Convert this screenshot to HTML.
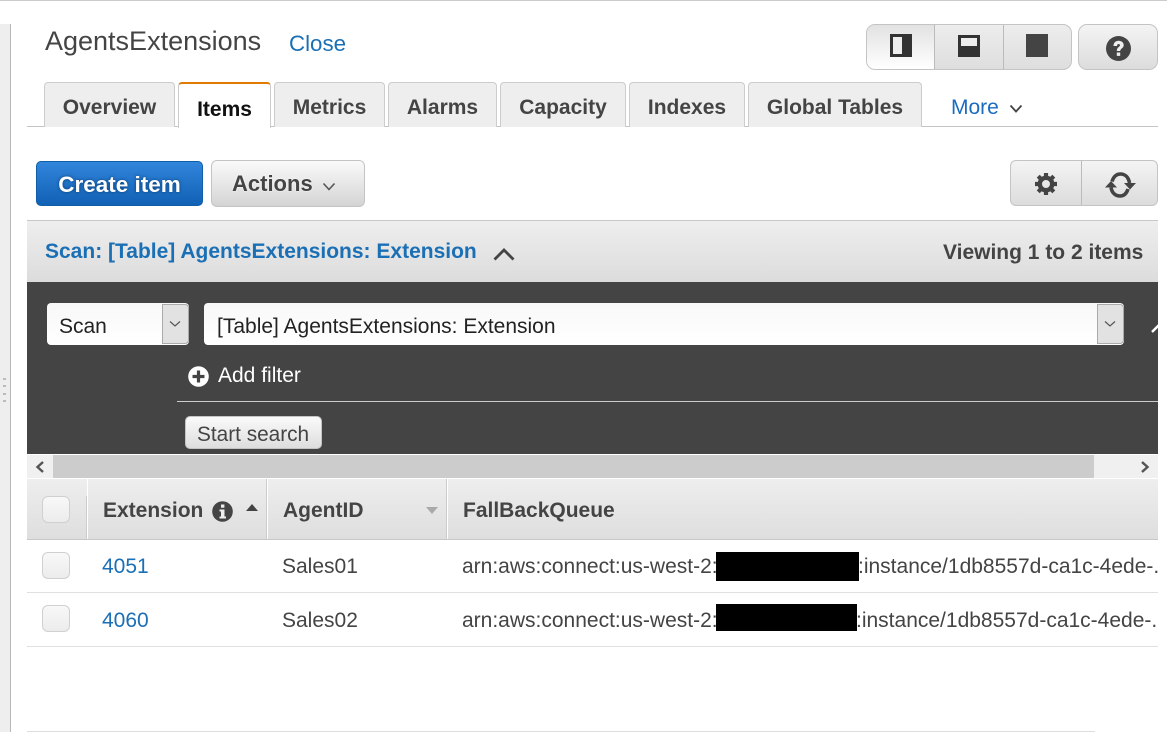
<!DOCTYPE html>
<html lang="en">
<head>
<meta charset="utf-8">
<title>AgentsExtensions</title>
<style>
html,body{margin:0;padding:0;background:#fff}
body{position:relative;width:1167px;height:732px;overflow:hidden;font-family:"Liberation Sans",Arial,sans-serif;color:#444}
.a,.t{position:absolute;box-sizing:border-box}
.t{white-space:nowrap;line-height:30px;height:30px}
.b{font-weight:bold}
.link{color:#1a6fb5}
.tab{position:absolute;box-sizing:border-box;top:82px;height:45px;background:#eee;border:1px solid #ccc;border-bottom:0;border-radius:4px 4px 0 0;font-weight:bold;font-size:21px;color:#444;text-align:center;line-height:49px}
.btn{position:absolute;box-sizing:border-box;border:1px solid #c4c4c4;border-radius:6px;background:linear-gradient(#f6f6f6,#dcdcdc)}
.cb{position:absolute;box-sizing:border-box;left:42px;width:28px;height:27px;border:1px solid #d0d0d0;border-radius:6px;background:linear-gradient(#f8f8f8,#ececec)}
svg{position:absolute;overflow:visible}
</style>
</head>
<body>
<!-- chrome -->
<div class="a" style="left:0;top:0;width:1167px;height:1px;background:#ccc"></div>
<div class="a" style="left:0;top:24px;width:11px;height:708px;background:#eee;border-right:1px solid #b8b8b8"></div>
<svg style="left:3px;top:376px" width="5" height="30"><g fill="#bbb"><rect x="0" y="2" width="3" height="2"/><rect x="0" y="9" width="3" height="2"/><rect x="0" y="17" width="3" height="2"/><rect x="0" y="24" width="3" height="2"/></g></svg>

<!-- title -->
<div class="t" style="left:45px;top:26px;font-size:27px;color:#444">AgentsExtensions</div>
<div class="t link" style="left:289px;top:28.500px;font-size:22.3px">Close</div>

<!-- layout buttons -->
<div class="btn" style="left:866px;top:24px;width:206px;height:46px;border-radius:9px;overflow:hidden;background:linear-gradient(#ededed,#dedede)">
  <div class="a" style="left:0;top:0;width:68px;height:44px;background:linear-gradient(#e2e2e2,#fff);border-right:1px solid #bbb"></div>
  <div class="a" style="left:136px;top:0;width:1px;height:44px;background:#bbb"></div>
</div>
<div class="a" style="left:890px;top:34px;width:22px;height:23px;background:#333"></div>
<div class="a" style="left:893px;top:37px;width:9px;height:17px;background:#eee"></div>
<div class="a" style="left:958px;top:35px;width:22px;height:22px;background:#333"></div>
<div class="a" style="left:961px;top:38px;width:16px;height:8px;background:#eee"></div>
<div class="a" style="left:1026px;top:34px;width:22px;height:23px;background:#444"></div>
<div class="btn" style="left:1078px;top:24px;width:80px;height:46px;border-radius:9px;background:linear-gradient(#f4f4f4,#dcdcdc)"></div>
<svg style="left:1106px;top:36px" width="25" height="25" viewBox="0 0 25 25"><circle cx="12.500" cy="12.500" r="12.500" fill="#444"/><path d="M7.500 10c0-3.400 2.300-5.200 5.100-5.200 3 0 5.100 1.800 5.100 4.400 0 2.900-3.500 3.300-3.500 5.800h-3.400c0-3.800 3.200-4 3.200-5.700 0-.8-.6-1.300-1.400-1.300-1 0-1.500.7-1.600 2z" fill="#eee"/><rect x="10.800" y="16.500" width="3.400" height="3.400" fill="#eee"/></svg>

<!-- tabs -->
<div class="a" style="left:27px;top:126px;width:1131px;height:1px;background:#c4c4c4"></div>
<div class="tab" style="left:44px;width:131px">Overview</div>
<div class="tab" style="left:178px;width:93px;height:46px;background:#fff;color:#111;border-top:2px solid #e07b00;line-height:51px;z-index:2">Items</div>
<div class="tab" style="left:274px;width:111px">Metrics</div>
<div class="tab" style="left:388px;width:109px">Alarms</div>
<div class="tab" style="left:500px;width:126px">Capacity</div>
<div class="tab" style="left:629px;width:116px">Indexes</div>
<div class="tab" style="left:748px;width:174px">Global Tables</div>
<div class="t link" style="left:951px;top:92.500px;font-size:21px;color:#1a6cc0">More</div>
<svg style="left:1009px;top:104px" width="14" height="10" viewBox="0 0 14 10"><path d="M1.500 1.500L7 7.500l5.500-6" fill="none" stroke="#444" stroke-width="1.800"/></svg>

<!-- action buttons -->
<div class="a b" style="left:36px;top:161px;width:167px;height:45px;border-radius:5px;border:1px solid #0f5ea8;background:linear-gradient(#3185db,#1161b5);color:#fff;font-size:22.500px;line-height:46px;text-align:center;text-shadow:0 0 3px #0a3a70">Create item</div>
<div class="btn" style="left:211px;top:160px;width:154px;height:47px;background:linear-gradient(#fafafa,#d4d4d4)"></div>
<div class="t b" style="left:232px;top:169px;font-size:22px;color:#444;text-shadow:0 0 2px #fff">Actions</div>
<svg style="left:322px;top:182px" width="14" height="10" viewBox="0 0 14 10"><path d="M1.500 1.500L7 7.500l5.500-6" fill="none" stroke="#555" stroke-width="1.600"/></svg>

<div class="btn" style="left:1010px;top:160px;width:148px;height:46px;background:linear-gradient(#f4f4f4,#dcdcdc)">
  <div class="a" style="left:70px;top:0;width:1px;height:44px;background:#bbb"></div>
</div>
<svg style="left:1034px;top:172px" width="24" height="24" viewBox="0 0 24 24"><circle cx="12" cy="12" r="6.200" fill="none" stroke="#444" stroke-width="4.400"/><g stroke="#444" stroke-width="4.200"><path d="M12 1v4M12 19v4M1 12h4M19 12h4M4.200 4.200l2.800 2.800M17 17l2.800 2.800M4.200 19.800L7 17M17 7l2.800-2.800"/></g></svg>
<svg style="left:1104px;top:171px" width="32" height="29" viewBox="0 0 32 29"><g fill="none" stroke="#444" stroke-width="3.600"><path d="M8 10.500C9.500 5.800 12.500 3 16.500 3c4.500 0 8 3.200 9 9"/><path d="M24 18c-1.500 4.800-4.500 7-8 7-4.500 0-8-3-9-8.500"/></g><path d="M20 12h12l-6 6.500zM1 16.500h12L7 10z" fill="#444"/></svg>

<!-- scan band -->
<div class="a" style="left:27px;top:220px;width:1131px;height:62px;border-top:1px solid #c8c8c8;background:linear-gradient(#eee,#dcdcdc)"></div>
<div class="t b link" style="left:45px;top:237px;font-size:21px">Scan: [Table] AgentsExtensions: Extension</div>
<svg style="left:493px;top:247px" width="22" height="14" viewBox="0 0 22 14"><path d="M1.500 12.500L11 3l9.500 9.500" fill="none" stroke="#444" stroke-width="2.800"/></svg>
<div class="t b" style="left:943px;top:238px;font-size:21px;color:#444">Viewing 1 to 2 items</div>

<!-- dark panel -->
<div class="a" style="left:27px;top:282px;width:1131px;height:172px;background:#444;overflow:hidden">
  <svg style="left:1124px;top:40px" width="10" height="12" viewBox="0 0 10 12"><path d="M1 10L9 2" stroke="#fff" stroke-width="2.400" fill="none"/></svg>
</div>
<div class="a" style="left:47px;top:303px;width:142px;height:42px;border-radius:4px;background:linear-gradient(#f8f8f8,#fff)"></div>
<div class="a" style="left:162px;top:304px;width:27px;height:40px;background:#e2e2e2;border:1px solid #aaa;border-radius:0 4px 4px 0"></div>
<svg style="left:169px;top:320px" width="12" height="8" viewBox="0 0 12 8"><path d="M1 1.500L6 6l5-4.500" fill="none" stroke="#555" stroke-width="1.200"/></svg>
<div class="t" style="left:59px;top:312px;font-size:21px;color:#222">Scan</div>
<div class="a" style="left:204px;top:303px;width:920px;height:42px;border-radius:4px;background:linear-gradient(#f8f8f8,#fff)"></div>
<div class="a" style="left:1097px;top:304px;width:27px;height:40px;background:#e2e2e2;border:1px solid #aaa;border-radius:0 4px 4px 0"></div>
<svg style="left:1104px;top:320px" width="12" height="8" viewBox="0 0 12 8"><path d="M1 1.500L6 6l5-4.500" fill="none" stroke="#555" stroke-width="1.200"/></svg>
<div class="t" style="left:217px;top:312px;font-size:21px;color:#222">[Table] AgentsExtensions: Extension</div>

<svg style="left:188px;top:366px" width="21" height="21" viewBox="0 0 21 21"><circle cx="10.500" cy="10.500" r="10.300" fill="#fff"/><path d="M10.500 4.500v12M4.500 10.500h12" stroke="#444" stroke-width="3.200"/></svg>
<div class="t" style="left:218px;top:361px;font-size:21px;color:#fff">Add filter</div>
<div class="a" style="left:177px;top:401px;width:981px;height:1px;background:#ccc"></div>
<div class="btn" style="left:185px;top:416px;width:137px;height:33px;border-radius:5px;background:linear-gradient(#fafafa,#dedede)"></div>
<div class="t" style="left:197px;top:420px;font-size:20.800px;color:#444">Start search</div>

<!-- scrollbar -->
<div class="a" style="left:27px;top:454px;width:1131px;height:1px;background:#fff"></div>
<div class="a" style="left:27px;top:455px;width:26px;height:23px;background:#f0f0f0"></div>
<div class="a" style="left:53px;top:455px;width:1041px;height:23px;background:#ccc"></div>
<div class="a" style="left:1094px;top:455px;width:64px;height:23px;background:#f0f0f0"></div>
<svg style="left:35px;top:461px" width="10" height="12" viewBox="0 0 10 12"><path d="M8 1L2.500 6 8 11" fill="none" stroke="#555" stroke-width="2.400"/></svg>
<svg style="left:1140px;top:461px" width="10" height="12" viewBox="0 0 10 12"><path d="M2 1l5.500 5L2 11" fill="none" stroke="#555" stroke-width="2.400"/></svg>

<!-- table header -->
<div class="a" style="left:27px;top:479px;width:1131px;height:61px;background:linear-gradient(#eee,#dedede);border-bottom:1px solid #c8c8c8"></div>
<div class="a" style="left:87px;top:479px;width:1px;height:60px;background:#fff"></div>
<div class="a" style="left:86px;top:496px;width:1px;height:43px;background:#ccc"></div>
<div class="a" style="left:267px;top:479px;width:1px;height:60px;background:#fff"></div>
<div class="a" style="left:266px;top:479px;width:1px;height:60px;background:#ccc"></div>
<div class="a" style="left:447px;top:479px;width:1px;height:60px;background:#fff"></div>
<div class="a" style="left:446px;top:479px;width:1px;height:60px;background:#ccc"></div>
<div class="cb" style="top:496px"></div>
<div class="t b" style="left:103px;top:496px;font-size:21px;color:#444">Extension</div>
<svg style="left:212px;top:501px" width="21" height="21" viewBox="0 0 21 21"><circle cx="10.500" cy="10.500" r="10.300" fill="#444"/><rect x="9" y="3.500" width="3.400" height="3.200" fill="#eee"/><path d="M7.500 8.500h5v7h1.500v2H7.500v-2H9v-5H7.500z" fill="#eee"/></svg>
<svg style="left:246px;top:504px" width="12" height="7" viewBox="0 0 12 7"><path d="M6 0l6 7H0z" fill="#444"/></svg>
<div class="t b" style="left:283px;top:496px;font-size:21px;color:#444">AgentID</div>
<svg style="left:426px;top:507px" width="12" height="7" viewBox="0 0 12 7"><path d="M0 0h12L6 7z" fill="#aaa"/></svg>
<div class="t b" style="left:463px;top:496px;font-size:21px;color:#444">FallBackQueue</div>

<!-- rows -->
<div class="cb" style="top:552px"></div>
<div class="t link" style="left:102px;top:552px;font-size:21px">4051</div>
<div class="t" style="left:282px;top:552px;font-size:21px">Sales01</div>
<div class="t" style="left:462px;top:552px;font-size:21px">arn:aws:connect:us-west-2:</div>
<div class="a" style="left:716px;top:552px;width:143px;height:29px;background:#000"></div>
<div class="a" style="left:859px;top:552px;width:299px;height:30px;overflow:hidden"><div class="t" style="left:-1px;top:0;font-size:21px">:instance/1db8557d-ca1c-4ede-...</div></div>
<div class="a" style="left:27px;top:592px;width:1131px;height:1px;background:#e0e0e0"></div>

<div class="cb" style="top:605px"></div>
<div class="t link" style="left:102px;top:606px;font-size:21px">4060</div>
<div class="t" style="left:282px;top:606px;font-size:21px">Sales02</div>
<div class="t" style="left:462px;top:606px;font-size:21px">arn:aws:connect:us-west-2:</div>
<div class="a" style="left:716px;top:604px;width:141px;height:27px;background:#000"></div>
<div class="a" style="left:857px;top:606px;width:301px;height:30px;overflow:hidden"><div class="t" style="left:-1px;top:0;font-size:21px">:instance/1db8557d-ca1c-4ede-...</div></div>
<div class="a" style="left:27px;top:646px;width:1131px;height:1px;background:#e0e0e0"></div>

<div class="a" style="left:27px;top:731px;width:1068px;height:1px;background:#ddd"></div>
</body>
</html>
